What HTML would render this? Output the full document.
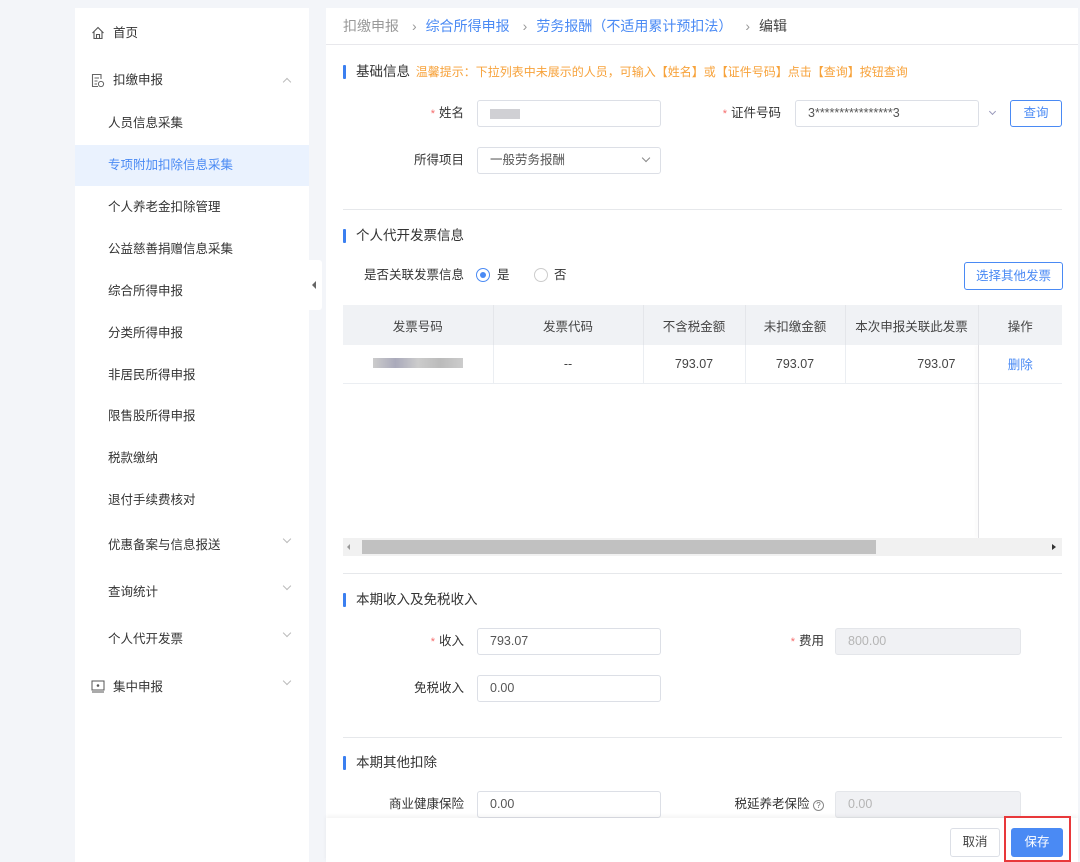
<!DOCTYPE html>
<html><head><meta charset="utf-8"><style>
*{box-sizing:border-box;margin:0;padding:0}
body{width:1080px;height:862px;background:#f3f5f9;font-family:"Liberation Sans","Noto Sans CJK SC",sans-serif;font-size:12.5px;color:#333;position:relative;overflow:hidden}
.a{position:absolute}
.side{left:75px;top:8px;width:234px;height:854px;background:#fff}
.mi{position:absolute;left:33px;font-size:12.5px;color:#333;line-height:16px}
.chev{position:absolute;left:209px;width:6px;height:6px;border-right:1px solid #bbb;border-bottom:1px solid #bbb;transform:rotate(45deg)}
.main{left:326px;top:8px;width:752px;height:854px;background:#fff}
.bc{left:326px;top:8px;width:752px;height:37px;background:#fff;border-bottom:1px solid #e8e8ec;font-size:14px;line-height:37px;padding-left:17px;color:#999}
.bc .l{color:#4a8af4}
.bc .s{color:#999;margin:0 9px 0 13px}
.ttl{position:absolute;left:343px;font-size:13.5px;color:#333;padding-left:13px;line-height:16px}
.ttl:before{content:"";position:absolute;left:0;top:1px;width:3px;height:14px;background:#3b7ff0;border-radius:1px}
.lbl{position:absolute;font-size:12.5px;color:#333;text-align:right;line-height:16px}
.lbl b{color:#f56c6c;font-weight:normal;margin-right:4px;font-size:11px}
.inp{position:absolute;height:27px;border:1px solid #dcdfe6;border-radius:3px;background:#fff;padding-left:12px;line-height:25px;font-size:12.5px;color:#555}
.dis{background:#f0f1f4;color:#b5b5b5;border-color:#e4e6ea}
.hr{position:absolute;left:343px;width:719px;height:1px;background:#e6e8eb}
.btn{position:absolute;border:1px solid #4a8af4;border-radius:3px;color:#4a8af4;text-align:center;font-size:12.5px;background:#fff}
table{border-collapse:collapse;position:absolute;left:343px;top:305px;width:719px;table-layout:fixed}
th{background:#f0f2f5;height:40px;font-weight:normal;color:#444;border-right:1px solid #e4e6ea;font-size:12.5px}
td{height:38px;border-right:1px solid #ebeef2;border-bottom:1px solid #ebeef2;text-align:center;color:#444}
</style></head><body>
<div class="a side">
 <svg class="a" style="left:16px;top:18px" width="14" height="14" viewBox="0 0 14 14"><path d="M1.5 7 7 1.5 12.5 7M3 5.5V12.5H11V5.5M5.5 12.5V8.5H8.5V12.5" fill="none" stroke="#555" stroke-width="1.1"/></svg>
 <div class="mi" style="top:17px;left:38px">首页</div>
 <svg class="a" style="left:16px;top:65px" width="14" height="15" viewBox="0 0 14 15"><path d="M10 6V1.5H1.5V13.5H7M3.5 5H8M3.5 8H6.5M3.5 11H6" fill="none" stroke="#666" stroke-width="1.1"/><circle cx="10" cy="11" r="2.6" fill="none" stroke="#666"/></svg>
 <div class="mi" style="top:64px;left:38px">扣缴申报</div>
 <div class="chev" style="top:71px;transform:rotate(225deg)"></div>
 <div class="mi" style="top:107px">人员信息采集</div>
 <div class="a" style="left:0;top:137px;width:234px;height:41px;background:#eaf2fe"></div>
 <div class="mi" style="top:149px;color:#4a8af4">专项附加扣除信息采集</div>
 <div class="mi" style="top:191px">个人养老金扣除管理</div>
 <div class="mi" style="top:233px">公益慈善捐赠信息采集</div>
 <div class="mi" style="top:275px">综合所得申报</div>
 <div class="mi" style="top:317px">分类所得申报</div>
 <div class="mi" style="top:359px">非居民所得申报</div>
 <div class="mi" style="top:400px">限售股所得申报</div>
 <div class="mi" style="top:442px">税款缴纳</div>
 <div class="mi" style="top:484px">退付手续费核对</div>
 <div class="mi" style="top:529px">优惠备案与信息报送</div><div class="chev" style="top:528px"></div>
 <div class="mi" style="top:576px">查询统计</div><div class="chev" style="top:575px"></div>
 <div class="mi" style="top:623px">个人代开发票</div><div class="chev" style="top:622px"></div>
 <svg class="a" style="left:16px;top:672px" width="14" height="13" viewBox="0 0 14 13"><rect x="1" y="1" width="12" height="9" fill="none" stroke="#555"/><path d="M1 12H13" stroke="#555"/><circle cx="7" cy="5.5" r="1.3" fill="#555"/></svg>
 <div class="mi" style="top:671px;left:38px">集中申报</div><div class="chev" style="top:670px"></div>
</div>
<div class="a" style="left:309px;top:260px;width:13px;height:50px;background:#fff;border-radius:0 3px 3px 0"></div>
<div class="a" style="left:312px;top:281px;width:0;height:0;border-top:4px solid transparent;border-bottom:4px solid transparent;border-right:4px solid #666"></div>
<div class="a main"></div>
<div class="a bc">扣缴申报<span class="s">›</span><span class="l">综合所得申报</span><span class="s">›</span><span class="l">劳务报酬（不适用累计预扣法）</span><span class="s">›</span><span style="color:#444">编辑</span></div>

<div class="ttl" style="top:64px">基础信息 <span style="color:#f7a23a;font-size:12px;margin-left:2px">温馨提示：下拉列表中未展示的人员，可输入【姓名】或【证件号码】点击【查询】按钮查询</span></div>
<div class="lbl" style="left:400px;width:64px;top:105px"><b>*</b>姓名</div>
<div class="inp" style="left:477px;top:100px;width:184px"><span style="display:inline-block;width:30px;height:10px;background:#d0d0d4;margin-top:8px"></span></div>
<div class="lbl" style="left:700px;width:81px;top:105px"><b>*</b>证件号码</div>
<div class="inp" style="left:795px;top:100px;width:184px">3****************3</div>
<div class="a" style="left:990px;top:109px;width:5px;height:5px;border-right:1px solid #99b;border-bottom:1px solid #99b;transform:rotate(45deg)"></div>
<div class="btn" style="left:1010px;top:100px;width:52px;height:27px;line-height:25px">查询</div>
<div class="lbl" style="left:400px;width:64px;top:152px">所得项目</div>
<div class="inp" style="left:477px;top:147px;width:184px">一般劳务报酬</div>
<div class="a" style="left:643px;top:155px;width:6px;height:6px;border-right:1px solid #888;border-bottom:1px solid #888;transform:rotate(45deg)"></div>
<div class="hr" style="top:209px"></div>

<div class="ttl" style="top:228px">个人代开发票信息</div>
<div class="lbl" style="left:360px;width:104px;top:267px">是否关联发票信息</div>
<div class="a" style="left:476px;top:268px;width:14px;height:14px;border:1px solid #4a8af4;border-radius:50%"></div>
<div class="a" style="left:480px;top:272px;width:6px;height:6px;background:#4a8af4;border-radius:50%"></div>
<div class="lbl" style="left:497px;top:267px">是</div>
<div class="a" style="left:534px;top:268px;width:14px;height:14px;border:1px solid #ccc;border-radius:50%"></div>
<div class="lbl" style="left:554px;top:267px">否</div>
<div class="btn" style="left:964px;top:262px;width:99px;height:28px;line-height:26px">选择其他发票</div>

<table>
<colgroup><col style="width:150px"><col style="width:150px"><col style="width:102px"><col style="width:100px"><col style="width:133px"><col style="width:84px"></colgroup>
<tr><th>发票号码</th><th>发票代码</th><th>不含税金额</th><th>未扣缴金额</th><th style="white-space:nowrap;overflow:hidden">本次申报关联此发票</th><th style="border-right:0">操作</th></tr>
<tr><td><span style="display:inline-block;width:90px;height:10px;background:linear-gradient(90deg,#ccc,#aab,#ccc,#bbb,#ccc)"></span></td><td>--</td><td>793.07</td><td>793.07</td><td style="text-align:right;padding-right:22px">793.07</td><td style="color:#4a8af4;border-right:0">删除</td></tr>
</table>
<div class="a" style="left:978px;top:345px;width:1px;height:193px;background:#e0e0e4;box-shadow:-2px 0 3px rgba(0,0,0,.06)"></div>
<div class="a" style="left:343px;top:538px;width:719px;height:18px;background:#f1f1f1"></div>
<div class="a" style="left:362px;top:540px;width:514px;height:14px;background:#c1c1c1"></div>
<div class="a" style="left:347px;top:544px;border-top:3px solid transparent;border-bottom:3px solid transparent;border-right:3px solid #999"></div>
<div class="a" style="left:1052px;top:544px;border-top:3px solid transparent;border-bottom:3px solid transparent;border-left:4px solid #333"></div>
<div class="hr" style="top:573px"></div>

<div class="ttl" style="top:592px">本期收入及免税收入</div>
<div class="lbl" style="left:400px;width:64px;top:633px"><b>*</b>收入</div>
<div class="inp" style="left:477px;top:628px;width:184px">793.07</div>
<div class="lbl" style="left:760px;width:64px;top:633px"><b>*</b>费用</div>
<div class="inp dis" style="left:835px;top:628px;width:186px">800.00</div>
<div class="lbl" style="left:400px;width:64px;top:680px">免税收入</div>
<div class="inp" style="left:477px;top:675px;width:184px">0.00</div>
<div class="hr" style="top:737px"></div>

<div class="ttl" style="top:755px">本期其他扣除</div>
<div class="lbl" style="left:370px;width:94px;top:796px">商业健康保险</div>
<div class="inp" style="left:477px;top:791px;width:184px">0.00</div>
<div class="lbl" style="left:720px;width:104px;top:796px">税延养老保险 <span style="display:inline-block;width:11px;height:11px;border:1px solid #888;border-radius:50%;font-size:8px;line-height:9px;text-align:center;color:#666">?</span></div>
<div class="inp dis" style="left:835px;top:791px;width:186px">0.00</div>

<div class="a" style="left:326px;top:818px;width:752px;height:44px;background:#fff;box-shadow:0 -2px 4px rgba(0,0,0,.05)"></div>
<div class="a" style="left:950px;top:828px;width:50px;height:29px;border:1px solid #dcdfe6;border-radius:3px;text-align:center;line-height:27px;color:#444">取消</div>
<div class="a" style="left:1004px;top:816px;width:67px;height:46px;border:2px solid #e8383a"></div>
<div class="a" style="left:1011px;top:828px;width:52px;height:29px;background:#4a8af4;border-radius:3px;text-align:center;line-height:29px;color:#fff">保存</div>
</body></html>
